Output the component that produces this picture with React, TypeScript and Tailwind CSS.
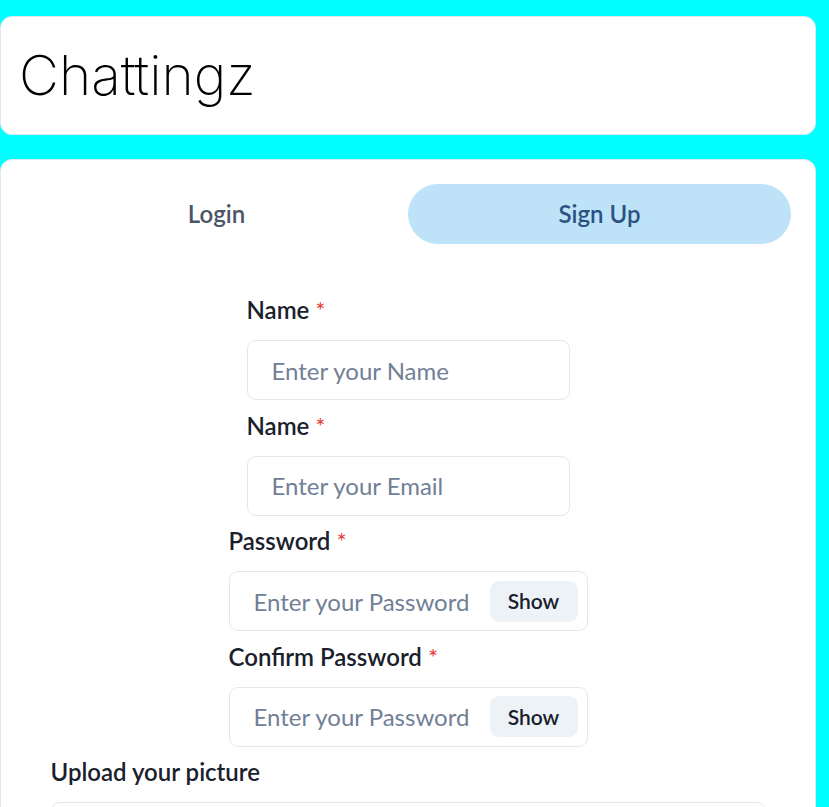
import React, { useState } from 'react';

const font = { fontFamily: 'Lato, "Open Sans", sans-serif' };

const Label = ({ children, required = true }: { children: React.ReactNode; required?: boolean }) => (
  <label className="block text-[24px] leading-[36px] font-semibold text-[#1a202c] mb-[12px]">
    {children}
    {required && <span className="text-[#e53e3e] ml-[6px] font-normal">*</span>}
  </label>
);

export default function App() {
  const [tab, setTab] = useState<'login' | 'signup'>('signup');
  const [showPw, setShowPw] = useState(false);
  const [showConfirm, setShowConfirm] = useState(false);

  const inputCls =
    'w-full h-[60px] border border-[#e2e8f0] rounded-[9px] px-[24px] text-[24px] text-[#1a202c] placeholder:text-[#718096] outline-none bg-white';

  return (
    <div className="min-h-screen bg-[#00ffff] pt-[16px] overflow-hidden" style={font}>
      <div className="w-[816px] flex flex-col gap-[24px]">
        {/* Header */}
        <div className="bg-white border border-[#e2e8f0] rounded-[12px] p-[18px]">
          <h1
            className="text-[55px] leading-[81px] font-extralight text-black"
            style={{ fontFamily: 'Inter, "Open Sans", sans-serif' }}
          >
            Chattingz
          </h1>
        </div>

        {/* Auth card */}
        <div className="bg-white border border-[#e2e8f0] rounded-t-[12px] p-[24px] pb-[40px]">
          <div className="flex mb-[24px]">
            <button
              onClick={() => setTab('login')}
              className={`flex-1 h-[60px] rounded-full text-[24px] font-semibold ${tab === 'login' ? 'bg-[#bee3f8] text-[#2c5282]' : 'text-[#4a5568]'}`}
            >
              Login
            </button>
            <button
              onClick={() => setTab('signup')}
              className={`flex-1 h-[60px] rounded-full text-[24px] font-semibold ${tab === 'signup' ? 'bg-[#bee3f8] text-[#2c5282]' : 'text-[#4a5568]'}`}
            >
              Sign Up
            </button>
          </div>

          <div className="flex flex-col items-center gap-[7.5px] pt-[24px]">
            <div className="w-[323px]">
              <Label>Name</Label>
              <input className={inputCls} placeholder="Enter your Name" />
            </div>
            <div className="w-[323px]">
              <Label>Name</Label>
              <input className={inputCls} placeholder="Enter your Email" />
            </div>
            <div className="w-[359px]">
              <Label>Password</Label>
              <div className="relative">
                <input
                  className={`${inputCls} pr-[108px]`}
                  type={showPw ? 'text' : 'password'}
                  placeholder="Enter your Password"
                />
                <div className="absolute right-0 top-0 h-[60px] w-[108px] flex items-center justify-center">
                  <button
                    onClick={() => setShowPw(!showPw)}
                    className="h-[41px] w-[88px] rounded-[9px] bg-[#edf2f7] text-[21px] font-semibold text-[#1a202c]"
                  >
                    {showPw ? 'Hide' : 'Show'}
                  </button>
                </div>
              </div>
            </div>
            <div className="w-[359px]">
              <Label>Confirm Password</Label>
              <div className="relative">
                <input
                  className={`${inputCls} pr-[108px]`}
                  type={showConfirm ? 'text' : 'password'}
                  placeholder="Enter your Password"
                />
                <div className="absolute right-0 top-0 h-[60px] w-[108px] flex items-center justify-center">
                  <button
                    onClick={() => setShowConfirm(!showConfirm)}
                    className="h-[41px] w-[88px] rounded-[9px] bg-[#edf2f7] text-[21px] font-semibold text-[#1a202c]"
                  >
                    {showConfirm ? 'Hide' : 'Show'}
                  </button>
                </div>
              </div>
            </div>
            <div className="w-[715px]">
              <Label required={false}>Upload your picture</Label>
              <div className="w-full h-[60px] border border-[#e2e8f0] rounded-[9px] bg-white" />
            </div>
          </div>
        </div>
      </div>
    </div>
  );
}
